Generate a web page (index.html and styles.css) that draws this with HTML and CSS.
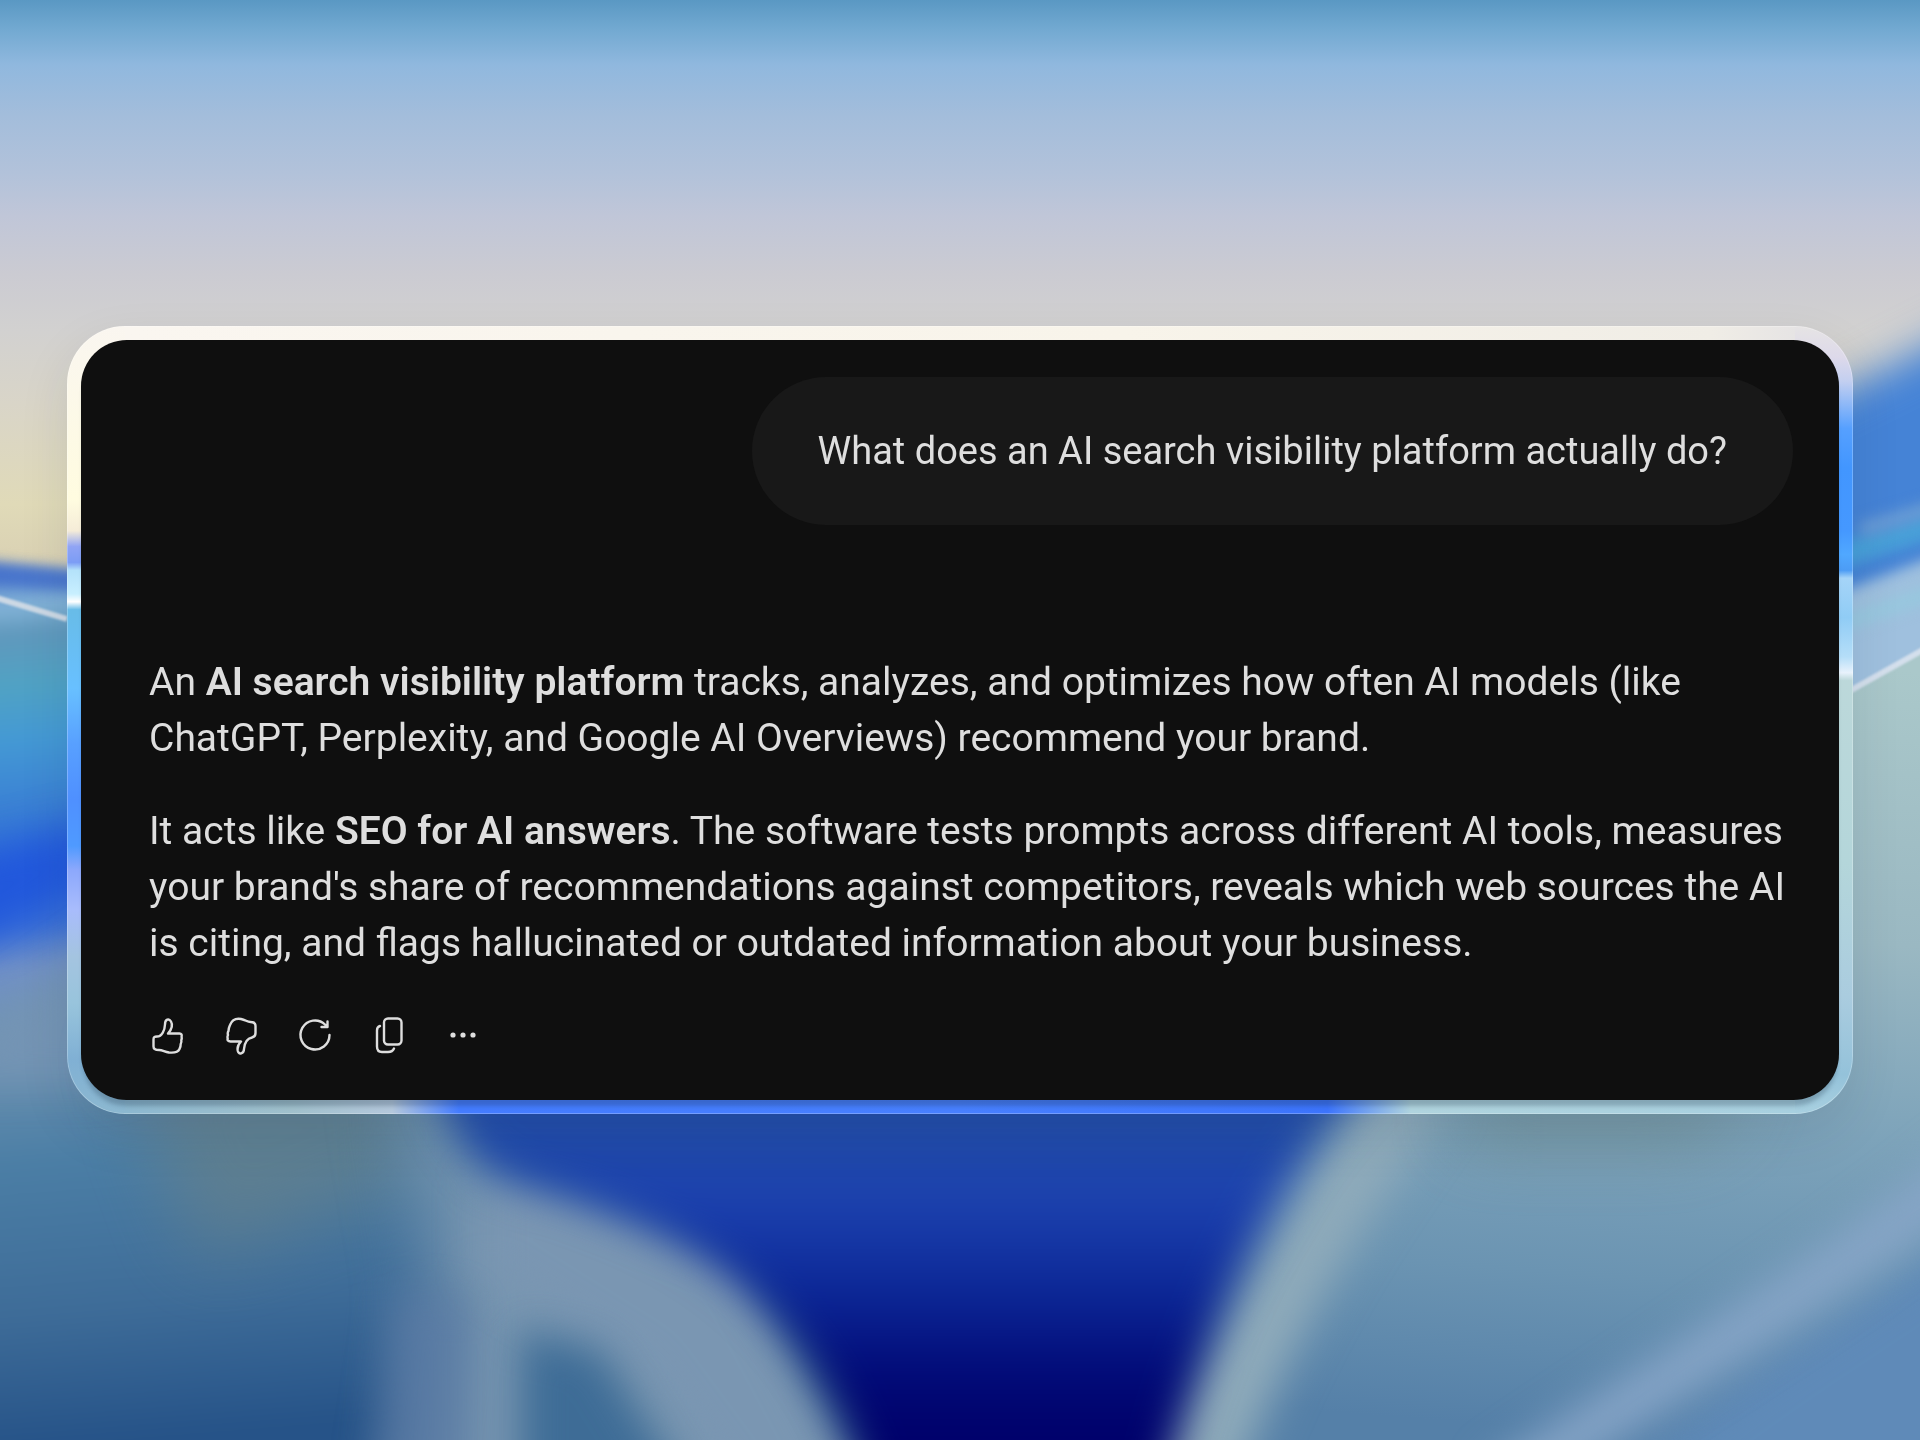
FILE: index.html
```html
<!DOCTYPE html>
<html lang="en">

<head>
  <meta charset="UTF-8">
  <meta name="viewport" content="width=device-width, initial-scale=1.0">
  <title>AI search visibility</title>
  <link rel="stylesheet" href="styles.css">
</head>

<body>

  <!-- wallpaper -->
  <svg class="wallpaper" viewBox="0 0 1920 1440" preserveAspectRatio="none" aria-hidden="true">
    <defs>
      <linearGradient id="sky" x1="0" y1="0" x2="0" y2="1">
        <stop offset="0" stop-color="#5a98c3" />
        <stop offset="0.02" stop-color="#72a9d1" />
        <stop offset="0.045" stop-color="#90b8de" />
        <stop offset="0.08" stop-color="#a3bddb" />
        <stop offset="0.12" stop-color="#b2c2da" />
        <stop offset="0.15" stop-color="#c0c6d8" />
        <stop offset="0.19" stop-color="#cbcbd2" />
        <stop offset="0.23" stop-color="#d2d1d0" />
        <stop offset="0.28" stop-color="#d9d5c8" />
        <stop offset="0.35" stop-color="#e0dab8" />
        <stop offset="0.4" stop-color="#d8cfb2" />
      </linearGradient>
      <linearGradient id="left" gradientUnits="userSpaceOnUse" x1="40" y1="560" x2="110" y2="1440">
        <stop offset="0" stop-color="#4a78c8" />
        <stop offset="0.05" stop-color="#84b4d8" />
        <stop offset="0.08" stop-color="#6098bc" />
        <stop offset="0.14" stop-color="#50a2c4" />
        <stop offset="0.2" stop-color="#4499d4" />
        <stop offset="0.28" stop-color="#3a80d4" />
        <stop offset="0.36" stop-color="#2f6cd8" />
        <stop offset="0.41" stop-color="#3d72d6" />
        <stop offset="0.46" stop-color="#7090c8" />
        <stop offset="0.54" stop-color="#7094b2" />
        <stop offset="0.68" stop-color="#4b7ea5" />
        <stop offset="0.85" stop-color="#3e6c98" />
        <stop offset="1" stop-color="#265388" />
      </linearGradient>
      <linearGradient id="right" gradientUnits="userSpaceOnUse" x1="1760" y1="660" x2="1700" y2="1440">
        <stop offset="0" stop-color="#aac8ca" />
        <stop offset="0.35" stop-color="#9ab8c2" />
        <stop offset="0.6" stop-color="#7da3ba" />
        <stop offset="0.8" stop-color="#6b94b2" />
        <stop offset="1" stop-color="#5580a8" />
      </linearGradient>
      <linearGradient id="deep" gradientUnits="userSpaceOnUse" x1="960" y1="1100" x2="960" y2="1440">
        <stop offset="0" stop-color="#2450a8" />
        <stop offset="0.3" stop-color="#1c41ae" />
        <stop offset="0.55" stop-color="#0d2998" />
        <stop offset="0.8" stop-color="#020b78" />
        <stop offset="1" stop-color="#00006a" />
      </linearGradient>
      <filter id="b2" filterUnits="userSpaceOnUse" x="-200" y="-200" width="2320" height="1840" color-interpolation-filters="sRGB"><feGaussianBlur stdDeviation="1" /></filter>
      <filter id="b8" filterUnits="userSpaceOnUse" x="-200" y="-200" width="2320" height="1840" color-interpolation-filters="sRGB"><feGaussianBlur stdDeviation="7" /></filter>
      <filter id="b20" filterUnits="userSpaceOnUse" x="-200" y="-200" width="2320" height="1840" color-interpolation-filters="sRGB"><feGaussianBlur stdDeviation="20" /></filter>
      <filter id="b40" filterUnits="userSpaceOnUse" x="-200" y="-200" width="2320" height="1840" color-interpolation-filters="sRGB"><feGaussianBlur stdDeviation="36" /></filter>
    </defs>

    <rect width="1920" height="1440" fill="url(#sky)" />

    <!-- left side -->
    <path d="M-60 558L120 576L1300 640V1520H-60Z" fill="url(#left)" filter="url(#b8)" />
    <path d="M-60 562L120 576V592L-60 580Z" fill="#4470cc" filter="url(#b8)" />
    <path d="M-10 596L67 619" stroke="#ccd8e4" stroke-width="6" fill="none" filter="url(#b2)" />
    <path d="M-80 870L100 820V880L-80 970Z" fill="#2157dc" filter="url(#b20)" />
    <path d="M-80 1070L120 930V1080H-80Z" fill="#7494b4" filter="url(#b20)" />

    <!-- right side -->
    <path d="M1560 540L1800 410L2100 260V760H1560Z" fill="#4583d6" filter="url(#b20)" />
    <path d="M1820 550L1960 500V530L1820 575Z" fill="#48a0d8" filter="url(#b8)" />
    <path d="M1860 530L1960 500" stroke="#6c9cd4" stroke-width="14" filter="url(#b8)" />
    <path d="M1820 600L1960 546V720H1820Z" fill="#9fc0de" filter="url(#b8)" />
    <path d="M1840 625L1940 590" stroke="#96c8de" stroke-width="14" filter="url(#b8)" />
    <path d="M1830 702L1930 646V1520H960L1200 1060Z" fill="url(#right)" />
    <path d="M1830 702L1930 646" stroke="#d4dfec" stroke-width="6" filter="url(#b2)" />

    <!-- lower folds -->
    <path d="M120 1040H420V1180L200 1260Z" fill="#66808a" opacity="0.7" filter="url(#b40)" />
    <path d="M400 1060H460L500 1180L700 1240L900 1560H400L440 1300Z" fill="#7896b0" filter="url(#b40)" />
    <path d="M480 1180L560 1190L740 1260L900 1560H780L640 1370L480 1270Z" fill="#7a96b2" filter="url(#b20)" />
    <path d="M390 1290L470 1300L470 1520H370Z" fill="#5c7ca6" opacity="0.7" filter="url(#b20)" />
    <path d="M520 1330L600 1350L720 1540H520Z" fill="#386894" opacity="0.9" filter="url(#b20)" />
    <path d="M1380 1060L1450 1100C1350 1240 1290 1340 1230 1500H1120Z" fill="#8eaaba" filter="url(#b20)" />
    <path d="M1460 1080H1760L1700 1140H1460Z" fill="#6e8b90" opacity="0.8" filter="url(#b40)" />
    <path d="M2000 1210C1840 1320 1680 1410 1560 1540H2000Z" fill="#5f8ab8" filter="url(#b20)" />
    <path d="M1980 1160C1820 1290 1640 1390 1500 1490" stroke="#88a6c8" stroke-width="46" fill="none" filter="url(#b20)" />
    <path d="M420 900C425 1110 450 1160 530 1185C660 1225 730 1260 800 1345C850 1410 865 1460 890 1560H1150C1180 1360 1270 1180 1370 1080V900Z" fill="url(#deep)" filter="url(#b20)" />
  </svg>

  <main class="frame">
    <section class="chat">
      <p class="question">What does an AI search visibility platform actually do?</p>

      <div class="answer">
        <p>An <strong>AI search visibility platform</strong> tracks, analyzes, and optimizes how often AI models (like ChatGPT, Perplexity, and Google AI Overviews) recommend your brand.</p>
        <p>It acts like <strong>SEO for AI answers</strong>. The software tests prompts across different AI tools, measures your brand's share of recommendations against competitors, reveals which web sources the AI is citing, and flags hallucinated or outdated information about your business.</p>
      </div>

      <div class="actions">
        <button type="button" aria-label="Good response">
          <svg viewBox="0 0 36 36">
            <path d="M19 16.500H30.500C32.500 16.500 33 18 32.600 19.500C32.900 21 32.800 22 32.300 23C32.600 24.500 32.300 26 31.700 27C31.800 29 31.200 30.500 30.500 32C29 35.500 25 36 20 35.500C15 34.500 13.500 33 10 33C6 33 4.500 32 4.500 29.500V22.500C4.500 20 5.500 19.500 8 19.500C13 19.500 15.800 13 16 7.500C16 2 20 1 22 4.500C24 8 22.500 12.500 19 16.500Z" />
          </svg>
        </button>
        <button type="button" aria-label="Bad response">
          <svg viewBox="0 0 36 36">
            <path d="M18 24.500H7.500C4.800 24.500 4.200 23 4.700 21.500C4.300 20 4.400 19 5 18C4.500 16.500 4.800 15 5.500 14C5.400 12 6 10.300 7 8C9 3 12.500 1 18 2C23 3 24 5 27.500 5C31 5 32.500 6.500 32.500 9V16C32.500 19 31.500 20 29 20.500C24 21.500 21.500 26.500 21 32C20.800 37 16 38 14.800 34C14 30.500 15 27.500 18 24.500Z" />
          </svg>
        </button>
        <button type="button" aria-label="Regenerate">
          <svg viewBox="0 0 36 36">
            <path d="M32.500 18A14.500 14.500 0 1 1 28 7.500L30 9.500M30.500 4.500V10H24.500" />
          </svg>
        </button>
        <button type="button" aria-label="Copy">
          <svg viewBox="0 0 36 36">
            <rect x="13" y="1.500" width="17.500" height="26" rx="4" />
            <path d="M9 9C7 9.500 6 11 6 13.500V29.500C6 33 7.500 35 11 35H17C20 35 22 34 23 31.500" />
          </svg>
        </button>
        <button type="button" aria-label="More">
          <svg class="dots" viewBox="0 0 36 36">
            <circle cx="8" cy="18" r="2.600" />
            <circle cx="18" cy="18" r="2.600" />
            <circle cx="28" cy="18" r="2.600" />
          </svg>
        </button>
      </div>
    </section>
  </main>

</body>

</html>
```
FILE: styles.css
```css
* {
  margin: 0;
  padding: 0;
  box-sizing: border-box;
}

body {
  min-height: 100vh;
  padding: 40px 67px;
  display: flex;
  align-items: center;
  background: #a9bedd;
  color: #dedede;
  font-family: Roboto, "Liberation Sans", sans-serif;
  font-size: 39px;
  line-height: 56px;
}

.wallpaper {
  position: fixed;
  inset: 0;
  z-index: -1;
  width: 100%;
  height: 100%;
}

/* glass rim round the dark panel: bottom, top, right and left edges */
.frame {
  flex: 1;
  padding: 14px;
  border-radius: 58px;
  background:
    linear-gradient(90deg, #8cb8d0, #a0c0cc 10%, #b4c8dc 16%, #447cff 20%, #4880ff 50%, #3c74fc 72%, #b0d4de 77%, #a8d0e0) 58px 100% / calc(100% - 116px) 14px no-repeat,
    linear-gradient(90deg, #faf6f0, #f8f4ea 60%, #f0ede6 95%, #e6e4e4) 58px 0 / calc(100% - 116px) 14px no-repeat,
    linear-gradient(#e6e4e4, #ddd9ea 4%, #c3cff0 7%, #56a0ff 13%, #4296ff 18%, #4598ff 26%, #50a8ff 29%, #4c9cf5 31%, #a5d4f8 32%, #90ccf5 37%, #b5def8 42%, #e8f2fc 44%, #bcd8da 45%, #b4d6da 68%, #aaccdf 85%, #94c2da 95%, #a8d0e0) 100% 0 / 58px 100% no-repeat,
    linear-gradient(#faf6f0, #fffce0 22%, #f5ecd8 26%, #90a4f5 28%, #7c9df5 30%, #b4e2fa 31%, #c8efff 34%, #ffffff 35%, #68bce8 36%, #68c0ff 46%, #58a0ff 53%, #4f90ff 60%, #4f9aff 66%, #8ca8fc 69%, #a8bcfc 74%, #a4c4e0 80%, #98c4dc 86%, #80b0d4 93%, #8cb8d0) 0 0 / 58px 100% no-repeat;
  box-shadow: inset 0 0 0 1px rgba(255, 255, 255, 0.25), 0 20px 50px rgba(20, 40, 60, 0.1);
}

.chat {
  padding: 37px 46px 47px 68px;
  border-radius: 46px;
  background: #0f0f0f;
  box-shadow: 0 8px 4px -2px rgba(20, 40, 60, 0.25);
}

.question {
  width: fit-content;
  margin-left: auto;
  padding: 46px 66px;
  border-radius: 75px;
  background: #181818;
  font-size: 38px;
}

.answer {
  display: grid;
  gap: 37px;
  margin-top: 129px;
}

.answer strong {
  font-weight: 600;
}

.actions {
  display: flex;
  gap: 38px;
  margin-top: 46px;
}

.actions button {
  width: 36px;
  height: 36px;
  border: 0;
  background: none;
  color: inherit;
  cursor: pointer;
}

.actions svg {
  display: block;
  overflow: visible;
  width: 36px;
  height: 36px;
  fill: none;
  stroke: currentColor;
  stroke-width: 2.4;
  stroke-linecap: round;
  stroke-linejoin: round;
}

.actions .dots {
  fill: currentColor;
  stroke: none;
}
```
